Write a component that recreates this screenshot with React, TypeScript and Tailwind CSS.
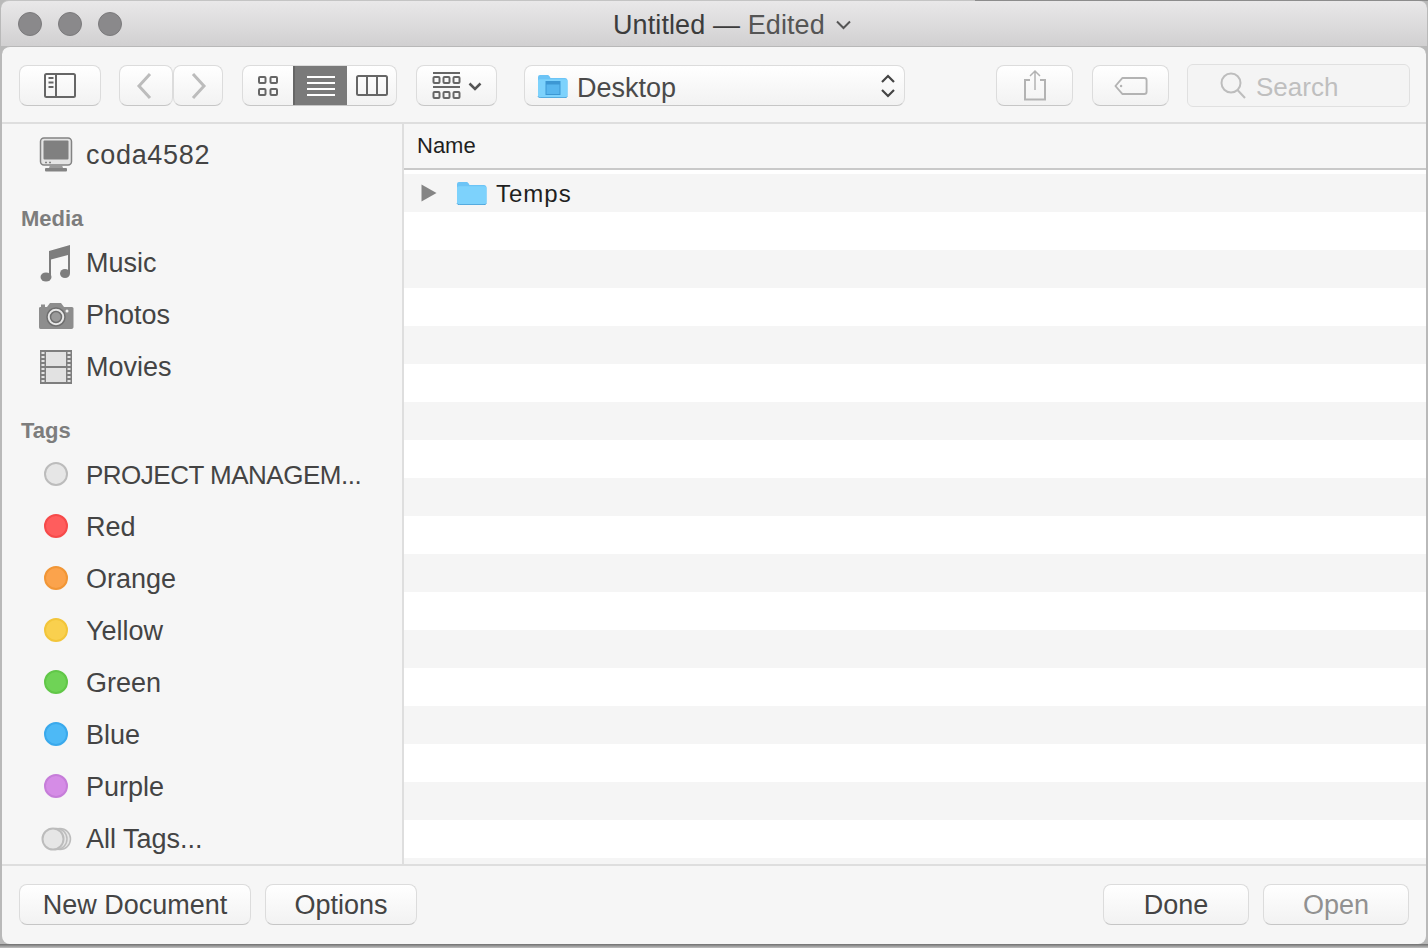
import React from "react";

const font = "[font-family:'Liberation_Sans',Arial,sans-serif]";
const btn = "h-[41px] rounded-[8px] border border-[#dcdcdc] border-b-[#c6c6c6] bg-linear-to-b from-white to-[#f2f2f2] flex items-center justify-center";

const stripes = Array.from({ length: 18 }, (_, i) => i);

const tags = [
  { name: "PROJECT MANAGEM...", cls: "bg-[#e6e6e6] border-[#bcbcbc]", text: "!text-[26px] tracking-[-0.5px]" },
  { name: "Red", cls: "bg-[#ff5d5d] border-[#f64a4a]", text: "" },
  { name: "Orange", cls: "bg-[#fba34c] border-[#f19636]", text: "" },
  { name: "Yellow", cls: "bg-[#f9d04e] border-[#f2c53a]", text: "" },
  { name: "Green", cls: "bg-[#6fd356] border-[#61c748]", text: "" },
  { name: "Blue", cls: "bg-[#4db9f6] border-[#3aa9ec]", text: "" },
  { name: "Purple", cls: "bg-[#d58ce6] border-[#c67dd9]", text: "" },
];

function SideRow({ icon, label, className = "" }: { icon: React.ReactNode; label: string; className?: string }) {
  return (
    <div className="h-[52px] flex items-center pl-[36px]">
      <div className="w-[36px] h-[36px] mr-[12px] flex items-center justify-center shrink-0">{icon}</div>
      <span className={`text-[27px] leading-none text-[#444444] whitespace-nowrap ${className}`}>{label}</span>
    </div>
  );
}

function SideLabel({ children }: { children: React.ReactNode }) {
  return (
    <div className="h-[56px] flex items-end pl-[19px] pb-[5px] text-[22px] leading-[26px] font-bold text-[#7d7d7d]">
      {children}
    </div>
  );
}

function FolderIcon({ screen }: { screen?: boolean }) {
  return (
    <svg width="31" height="24" viewBox="0 0 31 24">
      <path d="M1 3.5C1 1.8 1.8 1 3 1h7.5c1 0 1.5.5 2.2 1.6L13.5 4H28c1.4 0 2.5 1 2.5 2.4V21c0 1.6-1 2.6-2.5 2.6H3.2C1.8 23.6 1 22.6 1 21Z" fill="#6cc4f6" />
      <path d="M1 7c0-1 .8-1.7 1.8-1.7h25.6c1.2 0 2.1.7 2.1 1.7v14c0 1.6-1 2.4-2.5 2.4H3.2C1.8 23.4 1 22.6 1 21Z" fill="#7dd2fc" />
      <path d="M1 22.4c.4.9 1.100 1.200 2.200 1.200H28c1.300 0 2.100-.4 2.500-1.200" fill="none" stroke="#4fa7dc" strokeWidth="1" />
      {screen && (
        <g>
          <rect x="9" y="7.500" width="14" height="13" fill="#58b6ee" stroke="#3d97d3" strokeWidth="1" />
          <rect x="9" y="7.500" width="14" height="3" fill="#3d97d3" />
        </g>
      )}
    </svg>
  );
}

export default function App() {
  return (
    <div className={`${font} w-[1428px] h-[948px] overflow-hidden flex flex-col bg-[#b9b9b9] relative`}>
      <div className="absolute top-0 left-[975px] right-0 h-[1px] bg-[#8c8c8c]" />

      {/* title bar */}
      <div className="h-[46px] mx-[1px] shrink-0 rounded-t-[8px] border-t border-[#c4c4c4] bg-linear-to-b from-[#e9e8e9] to-[#d1d0d1] flex items-center pl-[17px]">
        <div className="flex gap-[16px] pt-[1px]">
          <div className="w-[24px] h-[24px] rounded-full bg-[#8a898b] border border-[#7b7a7c]" />
          <div className="w-[24px] h-[24px] rounded-full bg-[#8a898b] border border-[#7b7a7c]" />
          <div className="w-[24px] h-[24px] rounded-full bg-[#8a898b] border border-[#7b7a7c]" />
        </div>
        <div className="ml-[491px] pt-[4px] text-[27px] tracking-[0.1px] leading-none text-[#3c3c3c] whitespace-nowrap">
          Untitled — <span className="text-[#555555]">Edited</span>
        </div>
        <svg className="ml-[10px] mt-[2px]" width="17" height="10" viewBox="0 0 17 10">
          <path d="M2 1.500 8.500 8 15 1.500" fill="none" stroke="#555555" strokeWidth="2" />
        </svg>
      </div>

      {/* sheet */}
      <div className="h-[898px] mx-[2px] shrink-0 rounded-[8px] bg-[#f6f6f6] border-t border-[#b8b8b8] flex flex-col overflow-hidden">
        {/* toolbar */}
        <div className="h-[77px] shrink-0 border-b-2 border-[#dedede] flex items-center pl-[17px] pt-[2px]">
          <div className={`${btn} w-[82px]`}>
            <svg width="32" height="25" viewBox="0 0 32 25">
              <rect x="1" y="1" width="30" height="23" rx="1.500" fill="none" stroke="#666666" strokeWidth="2" />
              <path d="M12 1v23M4.500 5h5M4.500 9.500h5M4.500 14h5" stroke="#666666" strokeWidth="2" />
            </svg>
          </div>

          <div className="flex ml-[18px]">
            <div className={`${btn} w-[54px]`}>
              <svg className="mr-[5px]" width="16" height="28" viewBox="0 0 16 28">
                <path d="M14 2 3 14l11 12" fill="none" stroke="#bcbcbc" strokeWidth="3" />
              </svg>
            </div>
            <div className={`${btn} w-[50px]`}>
              <svg className="ml-[2px]" width="16" height="28" viewBox="0 0 16 28">
                <path d="M2 2l11 12L2 26" fill="none" stroke="#bcbcbc" strokeWidth="3" />
              </svg>
            </div>
          </div>

          <div className="flex ml-[19px] h-[41px] w-[155px] rounded-[8px] border border-[#dcdcdc] border-b-[#c6c6c6] bg-linear-to-b from-white to-[#f2f2f2] overflow-hidden">
            <div className="w-[50px] flex items-center justify-center">
              <svg width="20" height="20" viewBox="0 0 20 20">
                <g fill="none" stroke="#666666" strokeWidth="2">
                  <rect x="1" y="1" width="6.500" height="6" rx="1" />
                  <rect x="12.500" y="1" width="6.500" height="6" rx="1" />
                  <rect x="1" y="13" width="6.500" height="6" rx="1" />
                  <rect x="12.500" y="13" width="6.500" height="6" rx="1" />
                </g>
              </svg>
            </div>
            <div className="w-[54px] bg-[#7a7a7a] border-l-2 border-[#666666] flex items-center justify-center">
              <svg width="28" height="22" viewBox="0 0 28 22">
                <path d="M0 2h28M0 8h28M0 14h28M0 20h28" stroke="#ffffff" strokeWidth="2" />
              </svg>
            </div>
            <div className="flex-1 flex items-center justify-center">
              <svg width="32" height="21" viewBox="0 0 32 21">
                <rect x="1" y="1" width="30" height="19" rx="1.500" fill="none" stroke="#666666" strokeWidth="2" />
                <path d="M11 1v19M21 1v19" stroke="#666666" strokeWidth="2" />
              </svg>
            </div>
          </div>

          <div className={`${btn} w-[81px] ml-[19px] gap-[7px]`}>
            <svg width="29" height="28" viewBox="0 0 29 28">
              <path d="M1 1h27M1 15h27" stroke="#666666" strokeWidth="2" />
              <g fill="none" stroke="#666666" strokeWidth="2">
                <rect x="1.500" y="5" width="6" height="6" rx="1" />
                <rect x="11.500" y="5" width="6" height="6" rx="1" />
                <rect x="21.500" y="5" width="6" height="6" rx="1" />
                <rect x="1.500" y="20" width="6" height="6" rx="1" />
                <rect x="11.500" y="20" width="6" height="6" rx="1" />
                <rect x="21.500" y="20" width="6" height="6" rx="1" />
              </g>
            </svg>
            <svg width="14" height="9" viewBox="0 0 14 9" className="mt-[1px]">
              <path d="M1.500 1.500 7 7l5.500-5.500" fill="none" stroke="#555555" strokeWidth="2.500" />
            </svg>
          </div>

          <div className={`${btn} w-[381px] ml-[27px] !justify-start pl-[12px]`}>
            <FolderIcon screen />
            <span className="ml-[9px] pt-[5px] text-[27px] leading-none text-[#4a4a4a]">Desktop</span>
            <svg className="ml-[204px]" width="16" height="24" viewBox="0 0 16 24">
              <path d="M2 8l6-6 6 6M2 16l6 6 6-6" fill="none" stroke="#444444" strokeWidth="2.200" />
            </svg>
          </div>

          <div className={`${btn} w-[77px] ml-[91px]`}>
            <svg width="24" height="32" viewBox="0 0 24 32" className="mb-[1px]">
              <path d="M7 11H2v19.500h20V11h-5" fill="none" stroke="#b3b3b3" strokeWidth="2" />
              <path d="M12 21V2M7 7l5-5 5 5" fill="none" stroke="#b3b3b3" strokeWidth="1.500" />
            </svg>
          </div>
          <div className={`${btn} w-[77px] ml-[19px]`}>
            <svg width="34" height="20" viewBox="0 0 36 20">
              <path d="M9 1.500h23c1.500 0 2.500 1 2.500 2.500v12c0 1.500-1 2.500-2.500 2.500H9L1.500 10Z" fill="none" stroke="#b3b3b3" strokeWidth="2" strokeLinejoin="round" />
              <circle cx="7.500" cy="10" r="1.300" fill="#b3b3b3" />
            </svg>
          </div>
          <div className="ml-[18px] w-[223px] h-[43px] rounded-[6px] border border-[#e0e0e0] bg-[#f4f4f4] flex items-center pl-[32px]">
            <svg width="27" height="27" viewBox="0 0 27 27">
              <circle cx="11" cy="11" r="9.500" fill="none" stroke="#bdbdbd" strokeWidth="2" />
              <path d="M17.500 18 25 26" stroke="#bdbdbd" strokeWidth="2" />
            </svg>
            <span className="ml-[9px] pt-[2px] text-[26px] leading-none text-[#bfbfbf]">Search</span>
          </div>
        </div>

        {/* main */}
        <div className="flex-1 min-h-0 flex">
          <div className="w-[402px] shrink-0 border-r-2 border-[#dedede] pt-[5px] overflow-hidden">
            <SideRow
              label="coda4582"
              className="tracking-[0.7px]"
              icon={
                <svg width="34" height="36" viewBox="0 0 34 36">
                  <rect x="1.500" y="1" width="31" height="27" rx="3.500" fill="#e4e4e4" stroke="#838383" strokeWidth="1.500" />
                  <rect x="4.500" y="3.500" width="25" height="19" rx="1" fill="#808080" />
                  <path d="M6 25.500h2M10 25.500h2" stroke="#838383" strokeWidth="1.500" />
                  <path d="M11 28h12l1 3H10Z" fill="#9a9a9a" />
                  <rect x="6" y="31" width="22" height="3.500" rx="1" fill="#838383" />
                </svg>
              }
            />
            <SideLabel>Media</SideLabel>
            <SideRow
              label="Music"
              icon={
                <svg width="32" height="37" viewBox="0 0 32 37">
                  <path d="M9 6 30 0v28h-2V10L11 14.500V32H9Z" fill="#7d7d7d" />
                  <ellipse cx="6" cy="32" rx="5.500" ry="4.500" fill="#7d7d7d" />
                  <ellipse cx="25" cy="28.500" rx="5" ry="4.500" fill="#7d7d7d" />
                </svg>
              }
            />
            <SideRow
              label="Photos"
              icon={
                <svg width="36" height="27" viewBox="0 0 36 27">
                  <path d="M1 6.500c0-1 .5-1.500 1.500-1.500H9l3-4h11l3 4h7.500c1 0 2 .5 2 1.500V25c0 1-1 2-2 2h-31c-1 0-1.500-1-1.500-2Z" fill="#8d8d8d" />
                  <path d="M3 2.500h4V5H3Z" fill="#8d8d8d" />
                  <circle cx="18" cy="15" r="9" fill="#e8e8e8" stroke="#6f6f6f" strokeWidth="1.500" />
                  <circle cx="18" cy="15" r="5.500" fill="#9a9a9a" stroke="#6f6f6f" strokeWidth="1.500" />
                  <circle cx="29" cy="9" r="1.500" fill="#f2f2f2" />
                </svg>
              }
            />
            <SideRow
              label="Movies"
              icon={
                <svg width="32" height="34" viewBox="0 0 32 34">
                  <rect x="0" y="0" width="32" height="34" fill="#7e7e7e" />
                  <rect x="6" y="2" width="20" height="14" fill="#e2e2e2" />
                  <rect x="6" y="18" width="20" height="14" fill="#e2e2e2" />
                  <path d="M1.500 3h3M1.500 7h3M1.500 11h3M1.500 15h3M1.500 19h3M1.500 23h3M1.500 27h3M1.500 31h3M27.500 3h3M27.500 7h3M27.500 11h3M27.500 15h3M27.500 19h3M27.500 23h3M27.500 27h3M27.500 31h3" stroke="#e2e2e2" strokeWidth="2" />
                </svg>
              }
            />
            <SideLabel>Tags</SideLabel>
            {tags.map((t) => (
              <SideRow
                key={t.name}
                label={t.name}
                className={t.text}
                icon={<div className={`w-[24px] h-[24px] mb-[2px] rounded-full border-2 ${t.cls}`} />}
              />
            ))}
            <SideRow
              label="All Tags..."
              icon={
                <svg width="32" height="26" viewBox="0 0 32 26">
                  <circle cx="20" cy="13" r="10.500" fill="#e6e6e6" stroke="#bcbcbc" strokeWidth="1.500" />
                  <circle cx="16.500" cy="13" r="10.500" fill="#e6e6e6" stroke="#bcbcbc" strokeWidth="1.500" />
                  <circle cx="13" cy="13" r="10.500" fill="#e6e6e6" stroke="#bcbcbc" strokeWidth="2" />
                </svg>
              }
            />
          </div>

          <div className="flex-1 min-w-0 flex flex-col overflow-hidden">
            <div className="h-[46px] shrink-0 border-b-2 border-[#c9c9c9] flex items-center pl-[13px] pb-[1px] text-[22px] leading-none text-[#1f1f1f]">
              Name
            </div>
            <div className="h-[4px] shrink-0 bg-white" />
            <div className="flex-1 min-h-0 overflow-hidden bg-white">
              <div className="h-[38px] bg-[#f5f5f5] flex items-center pl-[17px]">
                <svg width="16" height="18" viewBox="0 0 16 18">
                  <path d="M0.500 0.500 15.500 9 0.500 17.500Z" fill="#858585" />
                </svg>
                <div className="ml-[19px] flex items-center">
                  <FolderIcon />
                </div>
                <span className="ml-[9px] pt-[2px] text-[24px] tracking-[1px] leading-none text-[#1f1f1f]">Temps</span>
              </div>
              {stripes.map((i) => (
                <div key={i} className={i % 2 === 0 ? "h-[38px] bg-white" : "h-[38px] bg-[#f5f5f5]"} />
              ))}
            </div>
          </div>
        </div>

        {/* footer */}
        <div className="h-[80px] shrink-0 border-t-2 border-[#dedede] flex items-center pl-[17px] pr-[17px] pb-[2px]">
          <div className={`${btn} w-[232px] pt-[2px] text-[27px] leading-none text-[#444444]`}>New Document</div>
          <div className={`${btn} w-[152px] ml-[14px] pt-[2px] text-[27px] leading-none text-[#444444]`}>Options</div>
          <div className={`${btn} w-[146px] ml-auto pt-[2px] text-[27px] leading-none text-[#444444]`}>Done</div>
          <div className={`${btn} w-[146px] ml-[14px] pt-[2px] text-[27px] leading-none text-[#919191]`}>Open</div>
        </div>
      </div>

      <div className="flex-1 bg-linear-to-b from-[#6f6f6f] to-[#c2c2c2]" />
    </div>
  );
}
